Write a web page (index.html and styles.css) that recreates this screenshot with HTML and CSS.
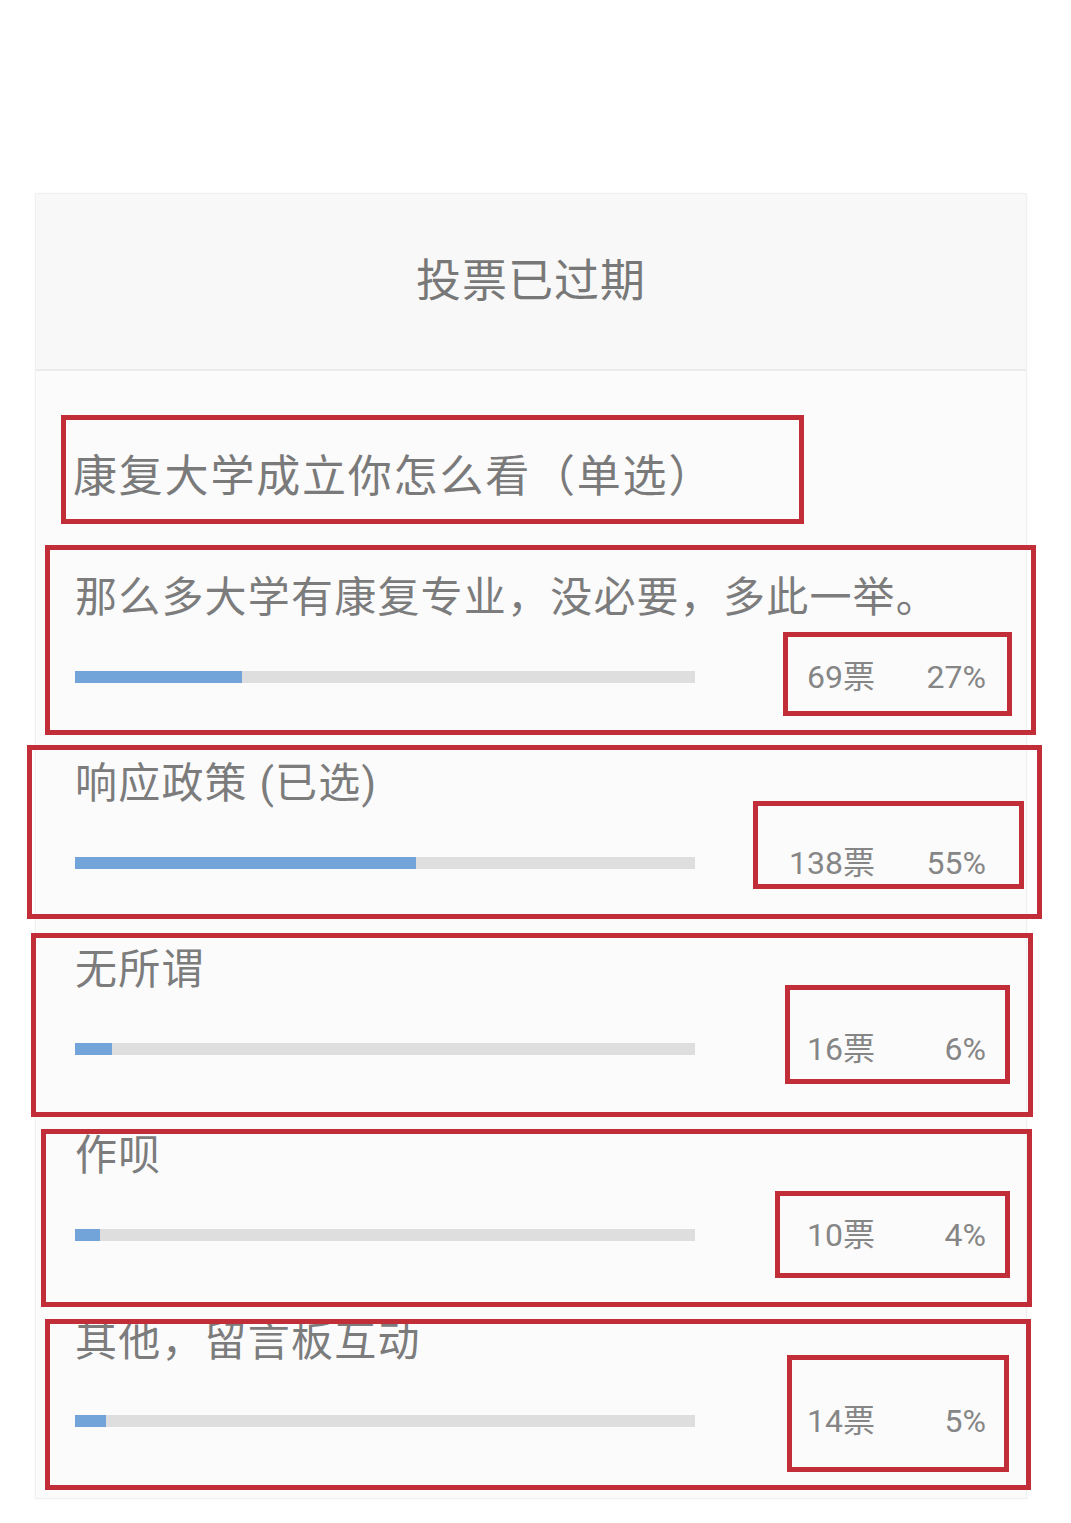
FILE: index.html
```html
<!DOCTYPE html>
<html lang="zh-CN">
<head>
  <meta charset="UTF-8" />
  <meta name="viewport" content="width=device-width, initial-scale=1.0"/>
  <title>投票</title>
  <link rel="stylesheet" href="styles.css">
</head>
<body>

  <div id="page">

    <!-- Cardul de vot -->
    <div class="vote-card">
      <div class="vote-header">投票已过期</div>

      <div class="vote-body">
        <div class="vote-question">康复大学成立你怎么看（单选）</div>

        <div class="vote-option">
          <div class="option-title">那么多大学有康复专业，没必要，多此一举。</div>
          <div class="option-track"><div class="option-fill" style="width: 27%"></div></div>
          <div class="option-count">69票</div>
          <div class="option-percent">27%</div>
        </div>

        <div class="vote-option">
          <div class="option-title">响应政策 (已选)</div>
          <div class="option-track"><div class="option-fill" style="width: 55%"></div></div>
          <div class="option-count">138票</div>
          <div class="option-percent">55%</div>
        </div>

        <div class="vote-option">
          <div class="option-title">无所谓</div>
          <div class="option-track"><div class="option-fill" style="width: 6%"></div></div>
          <div class="option-count">16票</div>
          <div class="option-percent">6%</div>
        </div>

        <div class="vote-option">
          <div class="option-title">作呗</div>
          <div class="option-track"><div class="option-fill" style="width: 4%"></div></div>
          <div class="option-count">10票</div>
          <div class="option-percent">4%</div>
        </div>

        <div class="vote-option">
          <div class="option-title">其他，留言板互动</div>
          <div class="option-track"><div class="option-fill" style="width: 5%"></div></div>
          <div class="option-count">14票</div>
          <div class="option-percent">5%</div>
        </div>
      </div>
    </div>

    <!-- Chenarele rosii desenate peste captura -->
    <div class="mark mark-question"></div>
    <div class="mark mark-row1"></div>
    <div class="mark mark-stat1"></div>
    <div class="mark mark-row2"></div>
    <div class="mark mark-stat2"></div>
    <div class="mark mark-row3"></div>
    <div class="mark mark-stat3"></div>
    <div class="mark mark-row4"></div>
    <div class="mark mark-stat4"></div>
    <div class="mark mark-row5"></div>
    <div class="mark mark-stat5"></div>

  </div>

</body>
</html>
```

FILE: styles.css
```css
/* Reset de bază */
* {
  margin: 0;
  padding: 0;
  box-sizing: border-box;
}

body {
  font-family: Roboto, "Noto Sans CJK SC", sans-serif;
  background: #fff;
  color: #7a7a7a;
  width: 1071px;
  height: 1523px;
  overflow: hidden;
}

#page {
  position: relative;
  padding: 193px 0 0 35px;
  height: 100%;
}

/* Cardul */
.vote-card {
  width: 992px;
  height: 1306px;
  background: #fbfbfc;
  border: 1px solid #f0f0f0;
  box-shadow: 0 0 4px rgba(0, 0, 0, 0.03);
}

.vote-header {
  height: 177px;
  background: #f8f8f8;
  border-bottom: 2px solid #ebebeb;
  display: flex;
  justify-content: center;
  align-items: center;
  padding-bottom: 8px;
  font-size: 45px;
  letter-spacing: 1px;
  color: #787878;
}

.vote-body {
  padding: 76px 40px 0 39px;
}

.vote-question {
  font-size: 44px;
  line-height: 60px;
  letter-spacing: 1.8px;
  color: #7a7a7a;
  margin-left: -2px;
  margin-bottom: 61px;
}

/* Optiunile */
.vote-option {
  height: 186px;
  display: grid;
  grid-template-columns: 620px 1fr 111px;
  grid-template-rows: 60px 40px;
  row-gap: 29px;
  align-items: center;
}

.option-title {
  grid-column: 1 / -1;
  font-size: 42px;
  line-height: 60px;
  letter-spacing: 1.2px;
  color: #7c7c7c;
  white-space: nowrap;
}

.option-track {
  height: 12px;
  background: #dedede;
}

.option-fill {
  height: 100%;
  background: #72a4da;
}

.option-count,
.option-percent {
  text-align: right;
  font-size: 32px;
  line-height: 40px;
  color: #868686;
}

/* Chenarele rosii */
.mark {
  position: absolute;
  border: 5px solid #c22e38;
}

.mark-question { left: 61px;  top: 415px;  width: 743px;  height: 109px; }
.mark-row1     { left: 45px;  top: 545px;  width: 991px;  height: 190px; }
.mark-stat1    { left: 783px; top: 632px;  width: 229px;  height: 84px; }
.mark-row2     { left: 27px;  top: 745px;  width: 1015px; height: 174px; }
.mark-stat2    { left: 753px; top: 801px;  width: 271px;  height: 88px; }
.mark-row3     { left: 31px;  top: 933px;  width: 1002px; height: 184px; }
.mark-stat3    { left: 785px; top: 985px;  width: 225px;  height: 99px; }
.mark-row4     { left: 41px;  top: 1129px; width: 991px;  height: 178px; }
.mark-stat4    { left: 775px; top: 1191px; width: 235px;  height: 87px; }
.mark-row5     { left: 45px;  top: 1319px; width: 986px;  height: 171px; }
.mark-stat5    { left: 787px; top: 1355px; width: 222px;  height: 117px; }
```
